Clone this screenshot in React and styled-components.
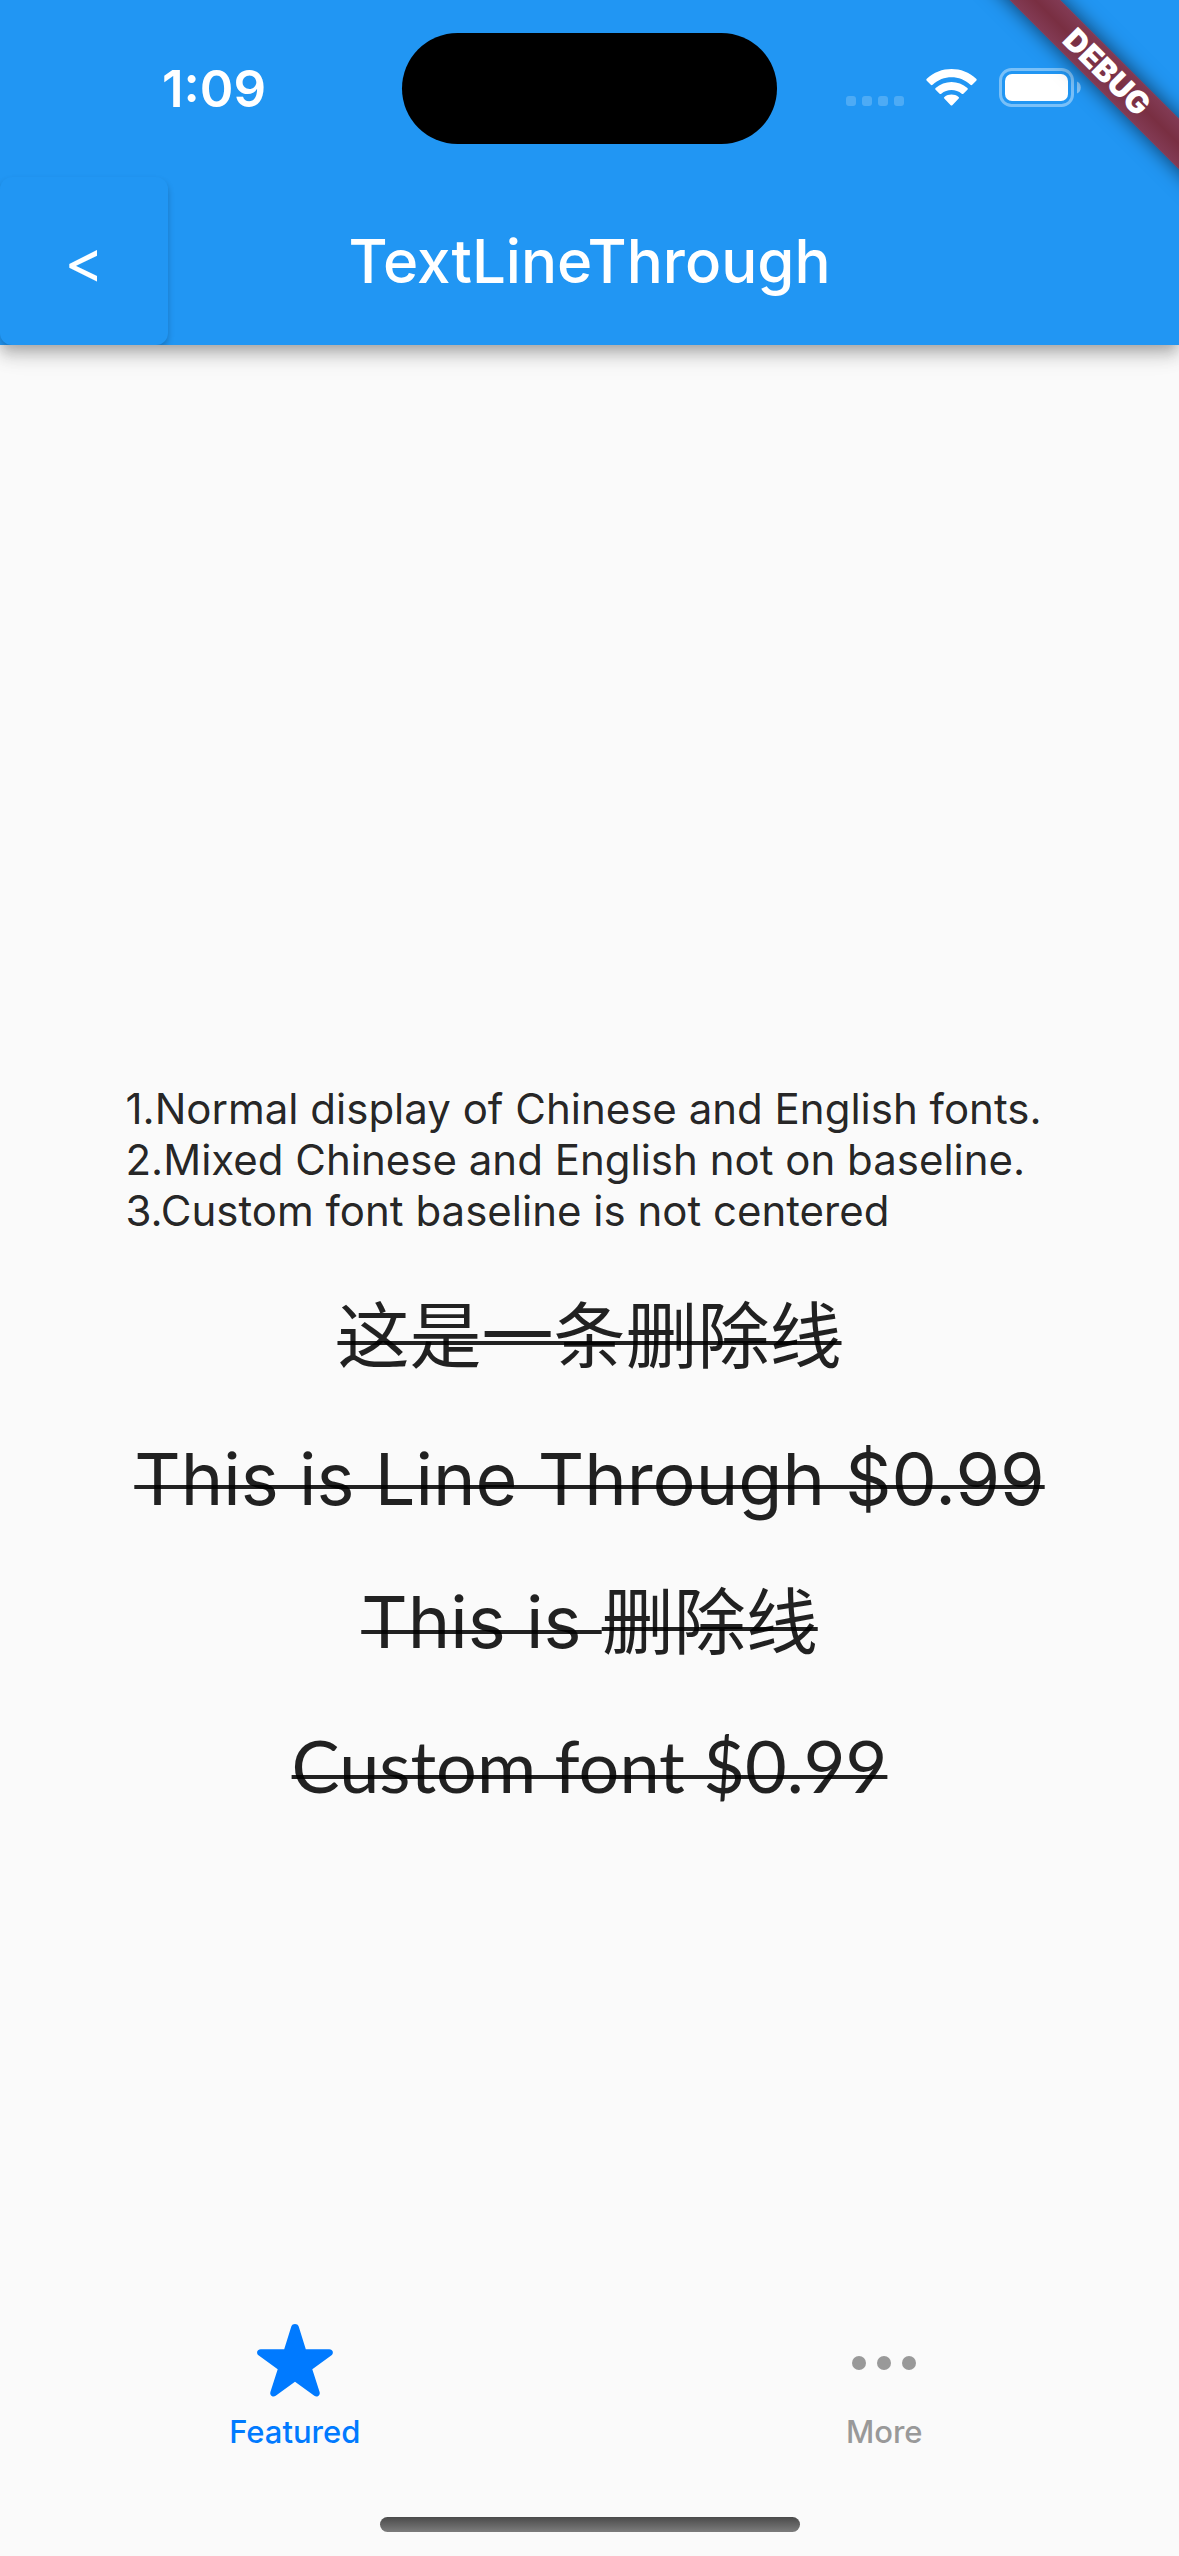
import React, { useState } from "react";
import styled, { createGlobalStyle } from "styled-components";

const sans = `Inter, "Noto Sans CJK SC", sans-serif`;
const blue = "#2196f3";
const ink = "rgba(0, 0, 0, 0.87)";

const GlobalStyle = createGlobalStyle`
  *, *::before, *::after { box-sizing: border-box; }
  body { margin: 0; background: #fafafa; font-family: ${sans}; }
  button { font: inherit; border: 0; padding: 0; margin: 0; cursor: pointer; }
`;

const Screen = styled.div`
  position: relative;
  display: flex;
  flex-direction: column;
  min-height: 100vh;
  overflow: hidden;
  background: #fafafa;
  color: ${ink};
`;

const Header = styled.header`
  overflow: hidden;
  background: ${blue};
  color: #fff;
  box-shadow:
    0 6px 12px -3px rgba(0, 0, 0, 0.2),
    0 12px 15px rgba(0, 0, 0, 0.14),
    0 3px 30px rgba(0, 0, 0, 0.1);
`;

const StatusBar = styled.div`
  display: grid;
  grid-template-columns: 1fr 375px 1fr;
  align-items: center;
  height: 177px;
`;

const Clock = styled.time`
  padding-left: 26px;
  text-align: center;
  font-size: 51px;
  font-weight: 600;
  line-height: 60px;
`;

const Island = styled.div`
  height: 111px;
  border-radius: 56px;
  background: #000;
`;

const StatusIcons = styled.div`
  display: flex;
  justify-content: flex-end;
  align-items: flex-end;
  gap: 22px;
  padding-right: 98px;
  padding-bottom: 2px;
`;

const SignalIcon = styled.svg`
  width: 58px;
  height: 11px;
`;

const WifiIcon = styled.svg`
  width: 51px;
  height: 38px;
`;

const BatteryIcon = styled.svg`
  width: 82px;
  height: 39px;
`;

const AppBar = styled.div`
  display: grid;
  grid-template-columns: 168px 1fr 168px;
  align-items: center;
  height: 168px;
`;

const BackButton = styled.button`
  height: 100%;
  border-radius: 12px;
  background: ${blue};
  color: #fff;
  font-size: 60px;
  font-weight: 400;
  line-height: 72px;
  box-shadow: 0 4px 6px rgba(0, 0, 0, 0.22);
`;

const Title = styled.h1`
  margin: 0;
  text-align: center;
  font-size: 60px;
  font-weight: 500;
  line-height: 72px;
`;

const Main = styled.main`
  flex: 1;
  display: flex;
  flex-direction: column;
  align-items: center;
  justify-content: center;
  gap: 57px;
  padding-top: 239px;
`;

const Notes = styled.p`
  margin: 0;
  padding-right: 12px;
  font-size: 42px;
  line-height: 51px;
`;

const Sample = styled.p`
  margin: 0;
  font-family: ${(p) => p.$font || sans};
  font-size: 72px;
  line-height: 86px;
  white-space: pre;
`;

const Strike = styled.s`
  text-decoration-line: underline;
  text-decoration-color: ${ink};
  text-decoration-thickness: 4px;
  text-decoration-skip-ink: none;
  text-underline-offset: -${(p) => p.$rise}px;
`;

const TabBar = styled.nav`
  display: grid;
  grid-template-columns: 1fr 1fr;
  padding-top: 9px;
`;

const Tab = styled.button`
  display: flex;
  flex-direction: column;
  align-items: center;
  gap: 8px;
  background: none;
  color: ${(p) => (p.$active ? "#007aff" : "#999")};
  font-size: 31px;
  font-weight: 500;
  line-height: 36px;
`;

const TabIcon = styled.svg`
  width: 90px;
  height: 90px;
  fill: currentColor;
`;

const HomeIndicator = styled.div`
  align-self: center;
  width: 420px;
  height: 15px;
  margin: 67px 0 24px;
  border-radius: 8px;
  background: linear-gradient(#4a4a4a, #7c7c7c);
`;

const BannerCorner = styled.div`
  position: absolute;
  top: 0;
  right: 0;
  width: 240px;
  height: 240px;
  overflow: hidden;
  pointer-events: none;
`;

const Banner = styled.div`
  position: absolute;
  top: 54px;
  left: 8px;
  width: 320px;
  height: 36px;
  transform: rotate(45deg);
  background: linear-gradient(#823b55, #792f42 50%, #823b55);
  box-shadow: 0 0 20px rgba(0, 0, 0, 0.6);
  color: #fff;
  text-align: center;
  font-size: 31px;
  font-weight: 900;
  line-height: 36px;
`;

function StarIcon() {
  return (
    <TabIcon viewBox="0 0 90 90" aria-hidden="true">
      <path d="M41.300 10.500C42.200 7.200 47.800 7.200 48.700 10.500L55.800 33.200L79.300 33.200C83 33.200 84.200 37.400 81.200 39.500L62.300 53.300L69.600 76C70.600 79.500 67 81.800 64.300 79.800L45 65.800L25.700 79.800C23 81.800 19.400 79.500 20.400 76L27.700 53.300L8.800 39.500C5.800 37.400 7 33.200 10.700 33.200L34.200 33.200Z" />
    </TabIcon>
  );
}

function MoreIcon() {
  return (
    <TabIcon viewBox="0 0 90 90" aria-hidden="true">
      <circle cx="20" cy="47" r="7" />
      <circle cx="45" cy="47" r="7" />
      <circle cx="70" cy="47" r="7" />
    </TabIcon>
  );
}

const tabs = [
  { label: "Featured", Icon: StarIcon },
  { label: "More", Icon: MoreIcon },
];

export default function App() {
  const [active, setActive] = useState("Featured");
  return (
    <>
      <GlobalStyle />
      <Screen>
        <Header>
          <StatusBar>
            <Clock>1:09</Clock>
            <Island />
            <StatusIcons>
              <SignalIcon viewBox="0 0 58 11" fill="#fff" fillOpacity="0.2" aria-hidden="true">
                <rect x="0" y="0" width="10" height="10" rx="3" />
                <rect x="16" y="0" width="10" height="10" rx="3" />
                <rect x="32" y="0" width="10" height="10" rx="3" />
                <rect x="48" y="0" width="10" height="10" rx="3" />
              </SignalIcon>
              <WifiIcon viewBox="0 0 51 38" fill="#fff" aria-hidden="true">
                <path d="M.8 11.800Q-.2 10.800.8 9.800C14.500-3.200 36.500-3.200 50.200 9.800Q51.200 10.800 50.200 11.800L46.200 15.800Q45.300 16.500 44.400 15.700C33.800 5.800 17.200 5.800 6.600 15.700Q5.700 16.500 4.800 15.800Z" />
                <path d="M9.600 20.800Q8.600 19.800 9.600 18.900C18.500 10.900 32.500 10.900 41.400 18.900Q42.400 19.800 41.400 20.800L37.400 24.700Q36.600 25.400 35.700 24.700C30 19.800 21 19.800 15.300 24.700Q14.400 25.400 13.600 24.700Z" />
                <path d="M18.300 29.600Q17.400 28.700 18.400 27.900C22.500 24.700 28.500 24.700 32.600 27.900Q33.600 28.700 32.700 29.600L26.300 36.200Q25.500 36.900 24.700 36.200Z" />
              </WifiIcon>
              <BatteryIcon viewBox="0 0 82 39" aria-hidden="true">
                <rect x="1.500" y="1.500" width="72" height="36" rx="11" fill="none" stroke="#fff" strokeOpacity="0.4" strokeWidth="3" />
                <rect x="6" y="6" width="63" height="27" rx="7" fill="#fff" />
                <path d="M78 13.500C83 15 83 24 78 25.500Z" fill="#fff" fillOpacity="0.45" />
              </BatteryIcon>
            </StatusIcons>
          </StatusBar>
          <AppBar>
            <BackButton type="button" aria-label="Back">&lt;</BackButton>
            <Title>TextLineThrough</Title>
          </AppBar>
        </Header>

        <Main>
          <Notes>
            1.Normal display of Chinese and English fonts.
            <br />
            2.Mixed Chinese and English not on baseline.
            <br />
            3.Custom font baseline is not centered
          </Notes>
          <Sample><Strike $rise={21}>这是一条删除线</Strike></Sample>
          <Sample><Strike $rise={20}>This is Line Through $0.99</Strike></Sample>
          <Sample>
            <Strike $rise={18}>{"This is "}</Strike>
            <Strike $rise={21}>删除线</Strike>
          </Sample>
          <Sample $font={`Lato, ${sans}`}>
            <Strike $rise={18}>Custom font $0.99</Strike>
          </Sample>
        </Main>

        <TabBar>
          {tabs.map(({ label, Icon }) => (
            <Tab key={label} type="button" $active={active === label} onClick={() => setActive(label)}>
              <Icon />
              {label}
            </Tab>
          ))}
        </TabBar>
        <HomeIndicator />

        <BannerCorner>
          <Banner>DEBUG</Banner>
        </BannerCorner>
      </Screen>
    </>
  );
}
